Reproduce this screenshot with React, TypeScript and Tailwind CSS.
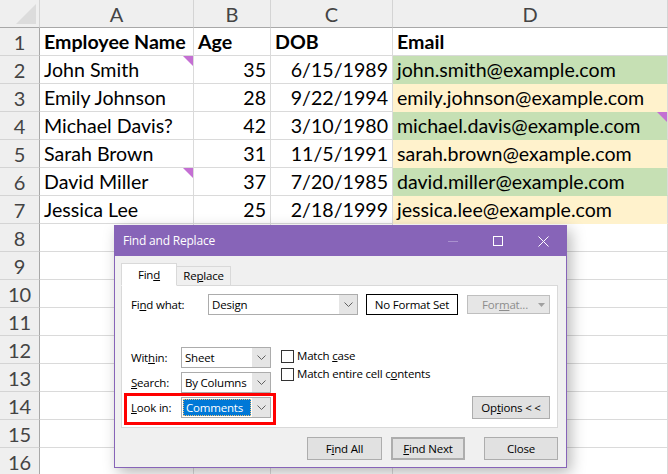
import type { ReactNode } from 'react'

type Row = { name: string; age: string; dob: string; email: string; fill?: 'green' | 'yellow'; noteA?: boolean; noteD?: boolean }

const ROWS: Row[] = [
  { name: 'John Smith', age: '35', dob: '6/15/1989', email: 'john.smith@example.com', fill: 'green', noteA: true },
  { name: 'Emily Johnson', age: '28', dob: '9/22/1994', email: 'emily.johnson@example.com', fill: 'yellow' },
  { name: 'Michael Davis?', age: '42', dob: '3/10/1980', email: 'michael.davis@example.com', fill: 'green', noteD: true },
  { name: 'Sarah Brown', age: '31', dob: '11/5/1991', email: 'sarah.brown@example.com', fill: 'yellow' },
  { name: 'David Miller', age: '37', dob: '7/20/1985', email: 'david.miller@example.com', fill: 'green', noteA: true },
  { name: 'Jessica Lee', age: '25', dob: '2/18/1999', email: 'jessica.lee@example.com', fill: 'yellow' },
]

const EMPTY = [8, 9, 10, 11, 12, 13, 14, 15, 16]

function Note() {
  return (
    <svg className="absolute right-0 top-0" width="10" height="10" viewBox="0 0 10 10">
      <polygon points="0,0 10,0 10,10" fill="#c46fd3" />
    </svg>
  )
}

function RowHead({ n }: { n: number }) {
  return (
    <div className="flex items-center justify-center border-b border-r border-b-[#d4d4d4] border-r-[#a8a8a8] bg-[#efefef] text-[20px] text-[#444]">
      {n}
    </div>
  )
}

function Cell({ children, className = '' }: { children?: ReactNode; className?: string }) {
  return (
    <div className={`relative flex items-center overflow-visible whitespace-nowrap border-b border-r border-[#dadada] px-[4px] text-[19.6px] text-black ${className}`}>
      {children}
    </div>
  )
}

function Sheet() {
  return (
    <div className="grid auto-rows-[28px] grid-cols-[40px_154px_77px_122px_275px] font-['Lato',sans-serif]">
      {/* column headers */}
      <div className="relative border-b border-r border-b-[#a8a8a8] border-r-[#d4d4d4] bg-[#efefef]">
        <svg className="absolute bottom-[3px] right-[3px]" width="20" height="20" viewBox="0 0 20 20">
          <polygon points="0,20 20,20 20,0" fill="#dcdcdc" />
        </svg>
      </div>
      {['A', 'B', 'C', 'D'].map((c) => (
        <div key={c} className="flex items-center justify-center border-b border-r border-b-[#a8a8a8] border-r-[#d4d4d4] bg-[#efefef] text-[20px] text-[#444]">
          {c}
        </div>
      ))}

      <RowHead n={1} />
      <Cell className="font-bold">Employee Name</Cell>
      <Cell className="font-bold">Age</Cell>
      <Cell className="font-bold">DOB</Cell>
      <Cell className="font-bold">Email</Cell>

      {ROWS.map((r, i) => (
        <div key={r.name} className="contents">
          <RowHead n={i + 2} />
          <Cell>
            {r.name}
            {r.noteA && <Note />}
          </Cell>
          <Cell className="justify-end">{r.age}</Cell>
          <Cell className="justify-end">{r.dob}</Cell>
          <Cell className={r.fill === 'green' ? 'border-b-transparent bg-[#c6e0b4]' : 'border-b-transparent bg-[#fff2cc]'}>
            {r.email}
            {r.noteD && <Note />}
          </Cell>
        </div>
      ))}

      {EMPTY.map((n) => (
        <div key={n} className="contents">
          <RowHead n={n} />
          <Cell />
          <Cell />
          <Cell />
          <Cell />
        </div>
      ))}
    </div>
  )
}

function Chevron({ color = '#606060' }: { color?: string }) {
  return (
    <svg width="9" height="5" viewBox="0 0 9 5">
      <polyline points="0.5,0.5 4.5,4.5 8.5,0.5" fill="none" stroke={color} strokeWidth="1" />
    </svg>
  )
}

function Combo({ value, width, selected }: { value: string; width: string; selected?: boolean }) {
  return (
    <div className={`flex h-[21px] ${width} border border-[#acacac] bg-white`}>
      <div className="flex flex-1 items-center px-[1px]">
        {selected ? (
          <span className="flex h-[17px] w-full items-center border border-dotted border-[#f0c070] bg-[#0078d7] px-[2px] text-white">
            {value}
          </span>
        ) : (
          <span className="px-[2px]">{value}</span>
        )}
      </div>
      <div className="flex w-[18px] items-center justify-center bg-[#e5e5e5]">
        <Chevron />
      </div>
    </div>
  )
}

function Btn({ children, className = '' }: { children: ReactNode; className?: string }) {
  return (
    <div className={`flex h-[23px] items-center justify-center border border-[#adadad] bg-[#e1e1e1] ${className}`}>
      {children}
    </div>
  )
}

function FindReplace() {
  return (
    <div className="absolute left-[114px] top-[225px] h-[243px] w-[453px] whitespace-nowrap border border-[#8764b8] bg-[#f0f0f0] font-['Open_Sans',sans-serif] text-[11.5px] tracking-[-0.2px] text-black shadow-[4px_5px_14px_rgba(0,0,0,0.28)]">
      {/* title bar */}
      <div className="flex h-[30px] items-center bg-[#8764b8] text-[12px] text-white">
        <span className="pl-[8px]">Find and Replace</span>
        <div className="ml-auto flex h-full">
          <div className="flex w-[45px] items-center justify-center">
            <div className="h-px w-[10px] bg-[#a991cf]" />
          </div>
          <div className="flex w-[45px] items-center justify-center">
            <div className="h-[10px] w-[10px] border border-white" />
          </div>
          <div className="flex w-[46px] items-center justify-center">
            <svg width="11" height="11" viewBox="0 0 11 11">
              <path d="M0.5 0.5 L10.5 10.5 M10.5 0.5 L0.5 10.5" stroke="white" strokeWidth="1" />
            </svg>
          </div>
        </div>
      </div>

      <div className="pl-[6px] pr-[8px] pt-[7px]">
        {/* tabs */}
        <div className="relative z-10 -mb-px flex items-end">
          <div className="flex h-[23px] w-[56px] items-center justify-center border border-[#d9d9d9] border-b-white bg-white">
            Fin<u>d</u>
          </div>
          <div className="flex h-[20px] w-[54px] items-center justify-center border border-l-0 border-[#d9d9d9] bg-[#f0f0f0]">
            Re<u>p</u>lace
          </div>
        </div>

        {/* tab panel */}
        <div className="h-[143px] border border-[#d9d9d9] bg-white pl-[9px] pr-[7px] pt-[8px]">
          <div className="flex items-center">
            <span className="w-[77px]">Fi<u>n</u>d what:</span>
            <Combo value="Design" width="w-[150px]" />
            <div className="ml-[8px] flex h-[21px] w-[92px] items-center justify-center border border-black bg-white">
              No Format Set
            </div>
            <div className="ml-[9px] flex h-[19px] w-[83px] items-center border border-[#bfbfbf] bg-[#e6e6e6] pl-[14px] text-[#8d8d8d]">
              <span>
                For<u>m</u>at...
              </span>
              <svg className="ml-auto mr-[4px]" width="7" height="4" viewBox="0 0 7 4">
                <polygon points="0,0 7,0 3.5,4" fill="#a0a0a0" />
              </svg>
            </div>
          </div>

          <div className="mt-[32px] flex">
            <div className="flex flex-col gap-[4px]">
              <div className="flex items-center">
                <span className="w-[50px]">Wit<u>h</u>in:</span>
                <Combo value="Sheet" width="w-[90px]" />
              </div>
              <div className="flex items-center">
                <span className="w-[50px]">
                  <u>S</u>earch:
                </span>
                <Combo value="By Columns" width="w-[90px]" />
              </div>
              <div className="flex items-center">
                <span className="w-[50px]">
                  <u>L</u>ook in:
                </span>
                <Combo value="Comments" width="w-[90px]" selected />
              </div>
            </div>

            <div className="ml-[10px] flex flex-col">
              <label className="flex h-[18px] items-center">
                <span className="h-[13px] w-[13px] border border-[#333] bg-white" />
                <span className="ml-[3px]">
                  Match <u>c</u>ase
                </span>
              </label>
              <label className="flex h-[18px] items-center">
                <span className="h-[13px] w-[13px] border border-[#333] bg-white" />
                <span className="ml-[3px]">
                  Match entire cell c<u>o</u>ntents
                </span>
              </label>
            </div>

            <Btn className="ml-auto mb-[-1px] h-[22px] w-[78px] self-end">
              Op<u>t</u>ions &lt; &lt;
            </Btn>
          </div>
        </div>

        {/* bottom buttons */}
        <div className="mt-[9px] flex justify-end">
          <Btn className="w-[75px]">
            F<u>i</u>nd All
          </Btn>
          <Btn className="ml-[9px] w-[74px] border-2 border-[#0078d7]">
            <u>F</u>ind Next
          </Btn>
          <Btn className="ml-[19px] w-[74px]">Close</Btn>
        </div>
      </div>

      {/* annotation */}
      <div className="absolute left-[9px] top-[167px] h-[32px] w-[152px] border-[3px] border-[#ff0000]" />
    </div>
  )
}

export default function App() {
  return (
    <div className="relative h-[474px] w-[668px] overflow-hidden bg-white">
      <Sheet />
      <FindReplace />
    </div>
  )
}
